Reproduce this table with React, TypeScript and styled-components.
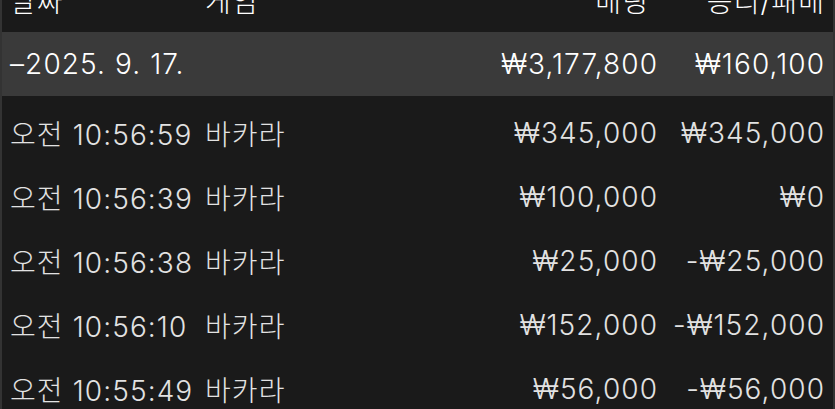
import styled, { createGlobalStyle } from "styled-components";

const GlobalStyle = createGlobalStyle`
  html, body {
    margin: 0;
    padding: 0;
    background: #1a1a1a;
    overflow: hidden;
  }
  body {
    font-family: Inter, "Noto Sans CJK KR", sans-serif;
  }
`;

const Frame = styled.div`
  width: 835px;
  height: 409px;
  box-sizing: border-box;
  border-left: 2px solid #333333;
  border-right: 2px solid #333333;
  background: #1a1a1a;
  overflow: hidden;
`;

const Row = styled.div<{ $tone?: "head" | "date" | "item" }>`
  display: grid;
  grid-template-columns: 195px 1fr 180px 167px;
  align-items: center;
  height: 64px;
  padding: 0 9px 0 8px;
  font-size: 28px;
  font-weight: 300;
  letter-spacing: 1.1px;
  color: ${(p) => (p.$tone === "item" ? "#e2e2e2" : "#ffffff")};
  background: ${(p) => (p.$tone === "date" ? "#3a3a3a" : "#1a1a1a")};
  margin-top: ${(p) => (p.$tone === "head" ? "-32px" : "0")};
`;

const Body = styled.div`
  padding-top: 5px;
`;

const Cell = styled.span<{ $right?: boolean; $inset?: number }>`
  white-space: nowrap;
  text-align: ${(p) => (p.$right ? "right" : "left")};
  margin-right: ${(p) => (p.$right ? "-1.1px" : "0")};
  padding-right: ${(p) => p.$inset ?? 0}px;
`;

const rows = [
  ["오전 10:56:59", "₩345,000", "₩345,000"],
  ["오전 10:56:39", "₩100,000", "₩0"],
  ["오전 10:56:38", "₩25,000", "-₩25,000"],
  ["오전 10:56:10", "₩152,000", "-₩152,000"],
  ["오전 10:55:49", "₩56,000", "-₩56,000"],
];

const App = () => {
  return (
    <Frame>
      <GlobalStyle />
      <Row $tone="head">
        <Cell>날짜</Cell>
        <Cell>게임</Cell>
        <Cell $right $inset={9}>배팅</Cell>
        <Cell $right>승리/패배</Cell>
      </Row>
      <Row $tone="date">
        <Cell>–2025. 9. 17.</Cell>
        <Cell />
        <Cell $right>₩3,177,800</Cell>
        <Cell $right>₩160,100</Cell>
      </Row>
      <Body>
        {rows.map(([time, bet, result]) => (
          <Row $tone="item" key={time}>
            <Cell>{time}</Cell>
            <Cell>바카라</Cell>
            <Cell $right>{bet}</Cell>
            <Cell $right>{result}</Cell>
          </Row>
        ))}
      </Body>
    </Frame>
  );
};

export default App;
